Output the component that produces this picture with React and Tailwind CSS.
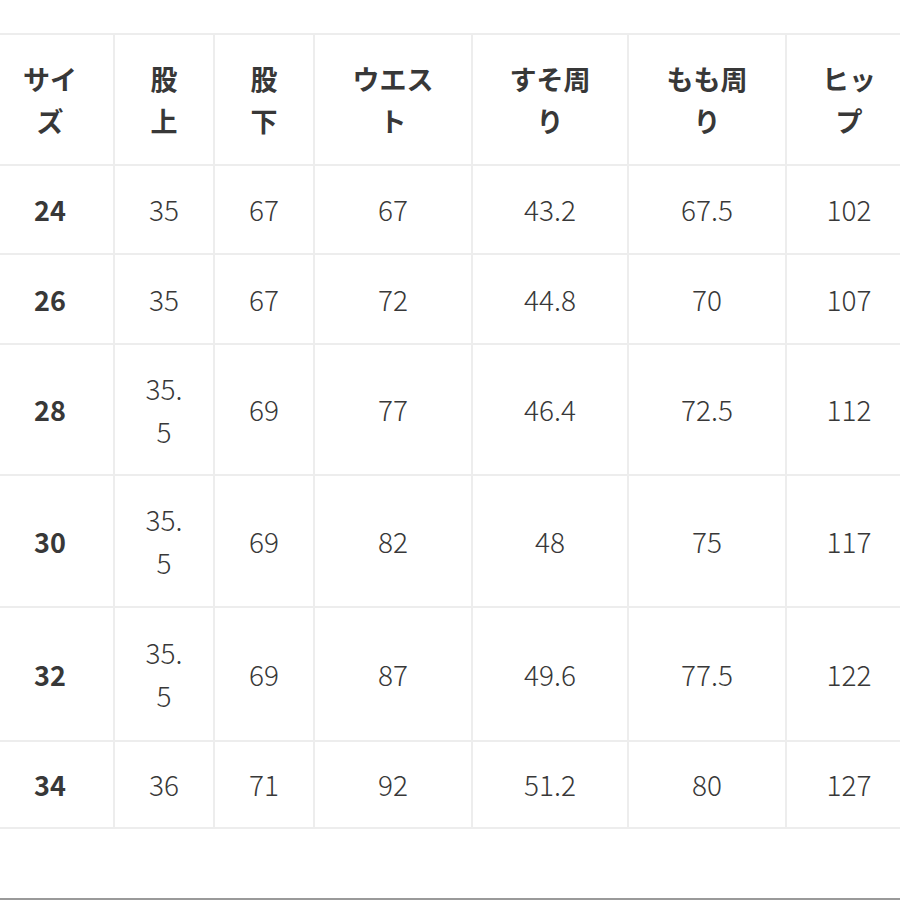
import React from "react";

const headers = [
  ["サイ", "ズ"],
  ["股", "上"],
  ["股", "下"],
  ["ウエス", "ト"],
  ["すそ周", "り"],
  ["もも周", "り"],
  ["ヒッ", "プ"],
];

const rows = [
  { h: "h-[87px]", cells: ["24", "35", "67", "67", "43.2", "67.5", "102"] },
  { h: "h-[88px]", cells: ["26", "35", "67", "72", "44.8", "70", "107"] },
  { h: "h-[129px]", cells: ["28", ["35.", "5"], "69", "77", "46.4", "72.5", "112"] },
  { h: "h-[130px]", cells: ["30", ["35.", "5"], "69", "82", "48", "75", "117"] },
  { h: "h-[132px]", cells: ["32", ["35.", "5"], "69", "87", "49.6", "77.5", "122"] },
  { h: "h-[85px]", cells: ["34", "36", "71", "92", "51.2", "80", "127"] },
];

function Lines({ v }) {
  if (Array.isArray(v)) {
    return (
      <>
        <span>{v[0]}</span>
        <span>{v[1]}</span>
      </>
    );
  }
  return <span>{v}</span>;
}

export default function App() {
  return (
    <div
      className="h-[900px] w-[900px] overflow-hidden bg-white flex flex-col text-[#383838]"
      style={{ fontFamily: '"Noto Sans CJK JP", "Noto Sans", sans-serif' }}
    >
      <div className="pt-[33px] -ml-[15px]">
        <div className="grid grid-cols-[126px_98px_98px_156px_154px_156px_124px] gap-[2px] p-[2px] bg-[#ededed] w-max">
          {headers.map((h, i) => (
            <div
              key={"h" + i}
              className="h-[129px] bg-white flex flex-col items-center justify-center text-[27px] font-bold leading-[42px]"
            >
              <span>{h[0]}</span>
              <span>{h[1]}</span>
            </div>
          ))}
          {rows.map((r, ri) =>
            r.cells.map((c, ci) => (
              <div
                key={ri + "-" + ci}
                className={
                  r.h +
                  " bg-white flex flex-col items-center justify-center leading-[43px] " +
                  (ci === 0 ? "text-[27px] font-bold" : "text-[28px] font-light")
                }
              >
                <Lines v={c} />
              </div>
            ))
          )}
        </div>
      </div>
      <div className="flex-1" />
      <div className="h-[2px] bg-[#9a9a9a]" />
    </div>
  );
}
